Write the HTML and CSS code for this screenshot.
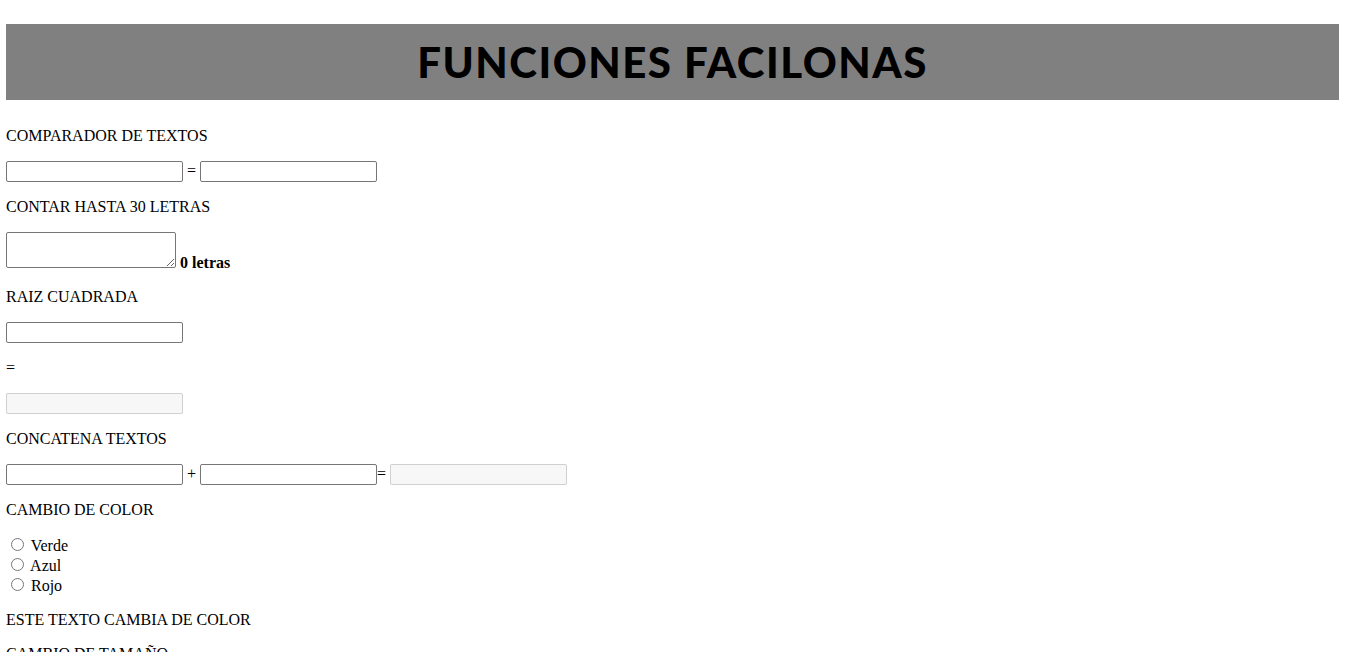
FILE: index.html
```
<!DOCTYPE html>
<html lang="es">
<head>
<meta charset="utf-8">
<title>Funciones facilonas</title>
<link rel="stylesheet" href="styles.css">
</head>
<body>
<header class="banner"><h1 class="banner-title">FUNCIONES FACILONAS</h1></header>
<main class="content">
<p class="label">COMPARADOR DE TEXTOS</p>
<p class="row"><input class="field" type="text"> = <input class="field" type="text"></p>
<p class="label">CONTAR HASTA 30 LETRAS</p>
<p class="row"><textarea class="area"></textarea> <b>0 letras</b></p>
<p class="label">RAIZ CUADRADA</p>
<p class="row"><input class="field" type="text"></p>
<p class="label">=</p>
<p class="row"><input class="field" type="text" disabled></p>
<p class="label">CONCATENA TEXTOS</p>
<p class="row"><input class="field" type="text"> + <input class="field" type="text">= <input class="field" type="text" disabled></p>
<p class="label">CAMBIO DE COLOR</p>
<p class="row radios"><input type="radio" name="c"> Verde<br><input type="radio" name="c"> Azul<br><input type="radio" name="c"> Rojo</p>
<p class="label">ESTE TEXTO CAMBIA DE COLOR</p>
<p class="label">CAMBIO DE TAMAÑO</p>
</main>
</body>
</html>
```
FILE: styles.css
```
html, body {
  background: #fff;
}
body {
  margin: 24px 8px 0 6px;
  font-family: "Liberation Serif", "Times New Roman", serif;
  font-size: 16px;
  color: #000;
}
.banner {
  background: #808080;
  height: 76px;
  display: flex;
  align-items: center;
  justify-content: center;
  margin-bottom: 27px;
}
.banner-title {
  margin: 0;
  font-family: "Lato", "DejaVu Sans", sans-serif;
  font-weight: 900;
  font-size: 42px;
  color: #000;
  letter-spacing: 1.5px;
}
.content p {
  margin: 16px 0;
}
.content .label {
  margin-top: 0;
}
.field {
  width: 177px;
  height: 21px;
  box-sizing: border-box;
  margin: 0;
  border: 1px solid #767676;
  border-radius: 2px;
  padding: 1px 2px;
  font-size: 13.33px;
  font-family: "Liberation Sans", Arial, sans-serif;
  vertical-align: baseline;
}
.field:disabled {
  background: #f7f7f7;
  border-color: rgba(118,118,118,0.3);
}
.area {
  width: 170px;
  height: 36px;
  box-sizing: border-box;
  margin: 0;
  border: 1px solid #767676;
  border-radius: 2px;
  font-family: "Liberation Mono", monospace;
  font-size: 13.33px;
}
```
